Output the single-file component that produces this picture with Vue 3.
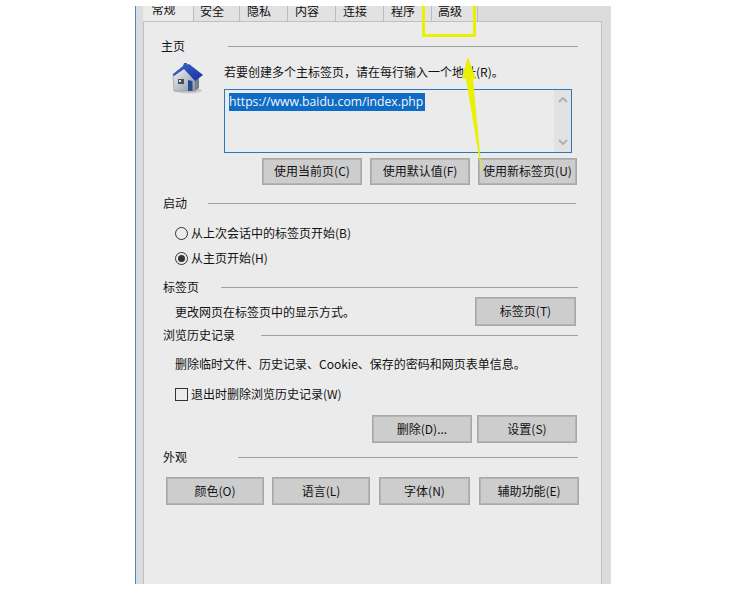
<script setup>
const tabs = [
  { label: '常规', width: 51, active: true },
  { label: '安全', width: 46 },
  { label: '隐私', width: 48 },
  { label: '内容', width: 48 },
  { label: '连接', width: 48 },
  { label: '程序', width: 48 },
  { label: '高级', width: 46 }
]
</script>

<template>
  <div class="page">
    <div class="window">
      <div class="tabs">
        <div
          v-for="tab in tabs"
          :key="tab.label"
          class="tab"
          :class="{ active: tab.active }"
          :style="{ width: tab.width + 'px' }"
        >{{ tab.label }}</div>
      </div>
      <div class="panel">
        <div class="heading h-home"><span>主页</span><i class="line l-home"></i></div>
        <div class="home-row">
          <svg class="house" viewBox="0 0 34 32" width="34" height="32">
            <defs>
              <linearGradient id="wall" x1="0" y1="0" x2="1" y2="1">
                <stop offset="0" stop-color="#f4f6f8" />
                <stop offset="1" stop-color="#8d99a6" />
              </linearGradient>
              <linearGradient id="roof" x1="0" y1="0" x2="1" y2="1">
                <stop offset="0" stop-color="#3f68cf" />
                <stop offset="1" stop-color="#16309c" />
              </linearGradient>
            </defs>
            <ellipse cx="17" cy="28.5" rx="14" ry="3" fill="#c9c9c9" />
            <path d="M2 13 L12 5 L24 17 L24 29 L3 29 Z" fill="url(#wall)" stroke="#8a949e" stroke-width=".6" />
            <path d="M24 17 L28 15 L28 26 L24 29 Z" fill="#77818c" />
            <path d="M12 4 L13 1 L16 1 L16 2.5 L18 2 L32 13 L24 19 L13 7 L3 14 L1.5 12.5 Z" fill="url(#roof)" />
            <path d="M17 18 L21.5 19 L21.5 29 L17 29 Z" fill="#274a8e" />
            <path d="M7 17 L13 17 L13 22 L7 22 Z" fill="#4a4f55" />
            <path d="M8 18 L10 18 L10 20 L8 20 Z" fill="#dfe4ea" />
          </svg>
          <div class="home-body">
            <div class="intro">若要创建多个主标签页，请在每行输入一个地址(R)。</div>
            <div class="urlbox">
              <span class="selected">https://www.baidu.com/index.php</span>
              <div class="scroll">
                <svg viewBox="0 0 10 6" width="10" height="6"><path d="M1 5 L5 1 L9 5" fill="none" stroke="#b0b0b0" stroke-width="2" /></svg>
                <svg viewBox="0 0 10 6" width="10" height="6"><path d="M1 1 L5 5 L9 1" fill="none" stroke="#b0b0b0" stroke-width="2" /></svg>
              </div>
            </div>
          </div>
        </div>
        <div class="btn-row r-home">
          <button class="btn w100">使用当前页(C)</button>
          <button class="btn w100">使用默认值(F)</button>
          <button class="btn w99">使用新标签页(U)</button>
        </div>

        <div class="heading h-start"><span>启动</span><i class="line l-start"></i></div>
        <label class="choice c1"><i class="radio"></i>从上次会话中的标签页开始(B)</label>
        <label class="choice c2"><i class="radio on"></i>从主页开始(H)</label>

        <div class="heading h-tabs"><span>标签页</span><i class="line l-tabs"></i></div>
        <div class="desc-row">
          <span>更改网页在标签页中的显示方式。</span>
          <button class="btn tabs-btn">标签页(T)</button>
        </div>

        <div class="heading h-history"><span>浏览历史记录</span><i class="line l-history"></i></div>
        <div class="desc">删除临时文件、历史记录、Cookie、保存的密码和网页表单信息。</div>
        <label class="choice c3"><i class="check"></i>退出时删除浏览历史记录(W)</label>
        <div class="btn-row r-history">
          <button class="btn w100 tall">删除(D)...</button>
          <button class="btn w100 tall">设置(S)</button>
        </div>

        <div class="heading h-look"><span>外观</span><i class="line l-look"></i></div>
        <div class="btn-row r-look">
          <button class="btn tall b1">颜色(O)</button>
          <button class="btn tall b1">语言(L)</button>
          <button class="btn tall b2">字体(N)</button>
          <button class="btn tall b3">辅助功能(E)</button>
        </div>
      </div>
    </div>

    <div class="mark-box"></div>
    <svg class="mark-arrow" viewBox="0 0 30 125" width="30" height="125">
      <path d="M8 0 L16 22 L13 22 L22 118 L6 22 L2 21 Z" fill="#e9f100" />
    </svg>
  </div>
</template>

<style>
html, body { margin: 0; background: #fff; }
</style>

<style scoped>
.page {
  position: relative;
  width: 745px;
  height: 597px;
  overflow: hidden;
  background: #fff;
  padding: 6px 0 0 135px;
  box-sizing: border-box;
  font-family: "Noto Sans CJK SC", "Noto Sans", sans-serif;
  font-size: 12px;
  color: #111;
}
.window {
  width: 476px;
  height: 578px;
  box-sizing: border-box;
  background: #dcdcdc;
  border-left: 1px solid #4a86c5;
  padding-left: 7px;
  padding-right: 9px;
  overflow: hidden;
}
.tabs {
  display: flex;
  height: 15px;
  overflow: hidden;
}
.tab {
  box-sizing: border-box;
  height: 15px;
  background: #e2e2e2;
  border-right: 1px solid #bcbcbc;
  text-align: center;
  line-height: 10px;
  padding-right: 9px;
  color: #111;
}
.tab.active {
  background: #ebebeb;
  line-height: 6px;
}
.panel {
  box-sizing: border-box;
  height: 563px;
  background: #ebebeb;
  border: 1px solid #c0c0c0;
  border-bottom: 0;
  padding-top: 15px;
}
.heading {
  display: flex;
  align-items: center;
  height: 18px;
  line-height: 18px;
  margin-left: 19px;
  white-space: nowrap;
}
.line { height: 1px; background: #a0a0a0; display: block; }
.h-home { margin-left: 17px; }
.l-home { width: 350px; margin-left: 43px; }
.h-start { margin-top: 9px; }
.l-start { width: 368px; margin-left: 21px; }
.h-tabs { margin-top: 10px; }
.l-tabs { width: 357px; margin-left: 22px; }
.h-history { margin-top: 0; }
.l-history { width: 317px; margin-left: 26px; }
.h-look { margin-top: 5px; }
.l-look { width: 340px; margin-left: 51px; }
.home-row { display: flex; margin-left: 27px; }
.house { margin-top: 7px; flex: none; }
.home-body { margin-left: 19px; }
.intro { margin-top: 8px; height: 18px; line-height: 18px; white-space: nowrap; }
.urlbox {
  position: relative;
  box-sizing: border-box;
  margin-top: 8px;
  width: 348px;
  height: 64px;
  border: 1px solid #2b78b8;
  padding: 2px 0 0 4px;
  background: #ebebeb;
}
.selected {
  display: inline-block;
  background: #0f6cc4;
  color: #f2f6fb;
  font-family: "Open Sans", "Noto Sans", sans-serif;
  font-size: 12.2px;
  line-height: 18px;
  height: 18px;
  width: 196px;
  white-space: nowrap;
}
.scroll {
  position: absolute;
  top: 0;
  right: 0;
  bottom: 0;
  width: 17px;
  background: #e2e2e2;
  display: flex;
  flex-direction: column;
  justify-content: space-between;
  align-items: center;
  padding: 7px 0;
  box-sizing: border-box;
}
.btn-row { display: flex; }
.btn {
  box-sizing: border-box;
  height: 27px;
  padding: 0 0 2px;
  background: #cdcdcd;
  border: 1px solid #a8a8a8;
  outline: 1px solid #b4b4b4;
  outline-offset: -2px;
  font: inherit;
  color: #111;
  white-space: nowrap;
}
.w100 { width: 100px; }
.w99 { width: 99px; }
.tall { height: 28px; }
.r-home { margin-top: 5px; margin-left: 118px; gap: 8px; }
.choice {
  display: flex;
  align-items: center;
  height: 20px;
  line-height: 20px;
  margin-left: 31px;
  white-space: nowrap;
}
.c1 { margin-top: 11px; }
.c2 { margin-top: 5px; }
.c3 { margin-top: 11px; }
.radio, .check {
  box-sizing: border-box;
  width: 13px;
  height: 13px;
  border: 1px solid #333;
  margin-right: 3px;
  flex: none;
  background: #ebebeb;
}
.radio { border-radius: 50%; position: relative; }
.radio.on::after {
  content: "";
  position: absolute;
  left: 2px;
  top: 2px;
  width: 7px;
  height: 7px;
  border-radius: 50%;
  background: #333;
}
.desc-row {
  display: flex;
  align-items: center;
  justify-content: space-between;
  height: 29px;
  margin: 1px 25px 0 31px;
  white-space: nowrap;
}
.tabs-btn { width: 101px; height: 29px; }
.desc { margin: 11px 0 0 31px; height: 18px; line-height: 18px; white-space: nowrap; }
.r-history { margin-top: 11px; margin-left: 228px; gap: 5px; }
.r-look { margin-top: 11px; margin-left: 22px; gap: 8px; }
.b1 { width: 98px; }
.b2 { width: 91px; margin-left: 1px; }
.b3 { width: 100px; margin-left: 1px; }
.mark-box {
  position: absolute;
  left: 422px;
  top: 6px;
  width: 54px;
  height: 31px;
  box-sizing: border-box;
  border: 3px solid #e9f100;
  border-top: 0;
}
.mark-arrow {
  position: absolute;
  left: 460px;
  top: 57px;
}
</style>
